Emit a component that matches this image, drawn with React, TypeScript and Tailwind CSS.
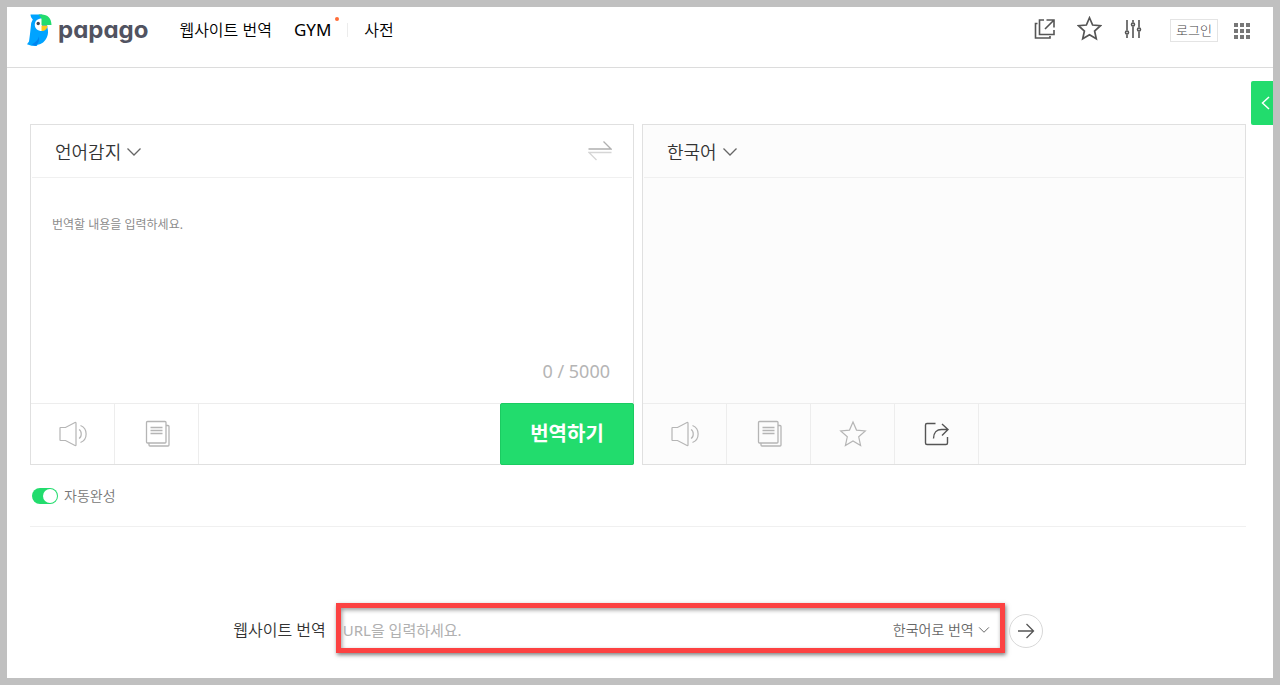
import { useState } from "react";

const MAX_LENGTH = 5000;

const SOURCE_LANGUAGES = ["언어감지", "한국어", "영어", "일본어"];
const TARGET_LANGUAGES = ["한국어", "영어", "일본어"];
const SITE_LANGUAGES = ["한국어로 번역", "영어로 번역", "일본어로 번역"];

const STAR_PATH =
  "M14 2l3.5 8.1 8.8.8-6.6 5.9 1.9 8.7L14 21l-7.6 4.5 1.9-8.7-6.6-5.9 8.8-.8z";

function PapagoBird() {
  return (
    <svg width="26" height="34" viewBox="0 0 26 34" aria-hidden="true">
      <path
        d="M3.500 1.500H15l4 5 1.500 8.500c.8 3 .8 6.200-.5 9-1.800 4.500-5.500 7.500-9.500 7.700-.3 1-.8 1.500-2 1.300l-4-.2-4.500-1.500L2 28.500 3 21l1.200-11 1.600-3.500C4.800 5.500 3.500 3.500 3.500 1.500z"
        fill="#00a3ff"
      />
      <path d="M12 23.500c-1.200 3.500-3.200 5.500-7.200 8l3.700 1.200c3-2 4.200-5.200 3.500-9.200z" fill="#0084f0" />
      <path d="M15 5.500c-4.500 0-7.200 2.500-7.200 6.200S10.400 18 15 18z" fill="#fff" />
      <circle cx="11.200" cy="10.500" r="1.700" fill="#444653" />
      <path d="M11.500 1.500h3c6.200 0 10 4 10 10.500h-10V5.500C13.500 4.200 12.500 2.500 11.500 1.500z" fill="#22dc6d" />
      <path d="M14.500 12.500h6c0 3.500-2.500 5.500-6 5.500z" fill="#ffc917" />
    </svg>
  );
}

function ChevronDown({ small = false }: { small?: boolean }) {
  return (
    <svg
      width={small ? 12 : 16}
      height={small ? 8 : 10}
      viewBox="0 0 16 10"
      fill="none"
      stroke="currentColor"
      strokeWidth="1.300"
      className="pointer-events-none text-[#666]"
      aria-hidden="true"
    >
      <path d="M1.500 1.500L8 8l6.500-6.500" />
    </svg>
  );
}

function SpeakerIcon() {
  return (
    <svg width="30" height="28" viewBox="0 0 30 28" fill="none" stroke="currentColor" strokeWidth="1.200" aria-hidden="true">
      <path d="M2.500 7.500h5L17 2.500q1-.3 1 .5v22q0 .8-1 .5l-9.500-5h-5q-.5 0-.5-.5V8q0-.5.500-.5z" />
      <path d="M21 9.500c3 1.500 3 7.500 0 9" />
      <path d="M22.500 5.500c7.500 3 7.500 14 0 17" />
    </svg>
  );
}

function CopyIcon() {
  return (
    <svg width="28" height="28" viewBox="0 0 28 28" fill="none" stroke="currentColor" strokeWidth="1.300" aria-hidden="true">
      <rect x="3.500" y="1.500" width="19.500" height="21.500" rx="1" />
      <path d="M23 5.500h2q1 0 1 1V25q0 1-1 1H7q-1 0-1-1v-2" />
      <path d="M7.500 7.500h12M7.500 10.500h12M7.500 13.500h12" />
    </svg>
  );
}

function StarIcon({ size, strokeWidth }: { size: number; strokeWidth: number }) {
  return (
    <svg width={size} height={size} viewBox="0 0 28 28" fill="none" stroke="currentColor" strokeWidth={strokeWidth} aria-hidden="true">
      <path d={STAR_PATH} />
    </svg>
  );
}

function ShareIcon() {
  return (
    <svg width="28" height="28" viewBox="0 0 28 28" fill="none" stroke="currentColor" strokeWidth="1.400" aria-hidden="true">
      <path d="M12.500 3.500H4q-1.500 0-1.500 1.500v18q0 1.500 1.500 1.500h19q1.500 0 1.500-1.500v-6" />
      <path d="M10.500 18.500c0-6 3.500-9 8-9h6M19 4l6 5.500-6 6" />
    </svg>
  );
}

function NewWindowIcon() {
  return (
    <svg width="22" height="22" viewBox="0 0 22 22" fill="none" stroke="currentColor" strokeWidth="1.600" aria-hidden="true">
      <path d="M10 2H5.500v14.500H20V12" />
      <path d="M3.500 5.500h-2V20H16v-2" />
      <path d="M12.500 2H20v7.500M20 2l-9 9" />
    </svg>
  );
}

function SettingsIcon() {
  return (
    <svg width="18" height="20" viewBox="0 0 18 20" fill="none" stroke="currentColor" strokeWidth="1.600" aria-hidden="true">
      <path d="M3 1v10.500M3 15.500V19M9 1v2.500M9 7.500V19M15 1v7.500M15 12.500V19" />
      <circle cx="3" cy="13.500" r="1.500" />
      <circle cx="9" cy="5.500" r="1.500" />
      <circle cx="15" cy="10.500" r="1.500" />
    </svg>
  );
}

function GridIcon() {
  return (
    <svg width="18" height="18" viewBox="0 0 18 18" fill="currentColor" aria-hidden="true">
      {[1, 7, 13].map((y) =>
        [1, 7, 13].map((x) => <rect key={`${x}-${y}`} x={x} y={y} width="4" height="4" />)
      )}
    </svg>
  );
}

type LanguageSelectProps = {
  label: string;
  options: string[];
};

function LanguageSelect({ label, options }: LanguageSelectProps) {
  return (
    <label className="flex items-center gap-[5px] pt-px text-[#333]">
      <select
        aria-label={label}
        className="field-sizing-content cursor-pointer appearance-none bg-transparent text-lg outline-none"
      >
        {options.map((option) => (
          <option key={option}>{option}</option>
        ))}
      </select>
      <ChevronDown />
    </label>
  );
}

type ToolButtonProps = {
  label: string;
  active?: boolean;
  children: React.ReactNode;
};

function ToolButton({ label, active = false, children }: ToolButtonProps) {
  return (
    <button
      type="button"
      aria-label={label}
      className={`flex w-[84px] items-center justify-center border-r border-[#ededed] ${
        active ? "text-[#555]" : "text-[#b5b5b5]"
      }`}
    >
      {children}
    </button>
  );
}

function Header() {
  return (
    <header className="flex h-[61px] items-start justify-between border-b border-[#dcdcdc] pr-[22px] pl-5">
      <div className="flex items-center pt-1.5">
        <a href="#" className="flex items-center gap-[5px]">
          <PapagoBird />
          <span className="font-['Inter',sans-serif] text-2xl leading-8 font-bold text-[#515361] [font-feature-settings:'cv11']">
            papago
          </span>
        </a>
        <nav className="ml-[31px] flex items-center text-base text-black">
          <a href="#">웹사이트 번역</a>
          <a href="#" className="relative ml-[22px] text-[17px] font-normal">
            GYM
            <span className="absolute top-0 -right-2 size-1 rounded-full bg-[#ff6c37]" />
          </a>
          <span className="mx-4 h-[14px] w-px bg-[#ececec]" />
          <a href="#">사전</a>
        </nav>
      </div>

      <div className="flex items-center pt-2 text-[#555]">
        <button type="button" aria-label="새 창">
          <NewWindowIcon />
        </button>
        <button type="button" aria-label="즐겨찾기" className="ml-[21px]">
          <StarIcon size={25} strokeWidth={1.9} />
        </button>
        <button type="button" aria-label="설정" className="ml-[22px]">
          <SettingsIcon />
        </button>
        <a
          href="#"
          className="mt-1 ml-7 flex h-[23px] w-12 items-center justify-center border border-[#e4e4e4] text-[13px] font-light text-[#444]"
        >
          로그인
        </a>
        <button type="button" aria-label="서비스 더보기" className="mt-1 ml-[15px] text-[#777]">
          <GridIcon />
        </button>
      </div>
    </header>
  );
}

function SourcePanel() {
  const [text, setText] = useState("");

  return (
    <section className="flex flex-1 flex-col border border-[#e0e0e0] bg-white">
      <div className="mx-px flex h-[53px] items-center justify-between border-b border-[#f0f0f0] pr-5 pl-[23px]">
        <LanguageSelect label="원본 언어" options={SOURCE_LANGUAGES} />
        <button type="button" aria-label="언어 바꾸기">
          <svg width="24" height="20" viewBox="0 0 24 20" fill="none" strokeWidth="1.300" aria-hidden="true">
            <path d="M.500 8h22.500L15.500.5" stroke="#b0b0b0" />
            <path d="M23.500 11.500H1l7.500 7.500" stroke="#d6d6d6" />
          </svg>
        </button>
      </div>
      <div className="flex h-[225px] flex-col">
        <textarea
          aria-label="번역할 내용"
          value={text}
          maxLength={MAX_LENGTH}
          onChange={(event) => setText(event.target.value)}
          placeholder="번역할 내용을 입력하세요."
          className="w-full flex-1 resize-none px-[21px] pt-[37px] text-xs leading-5 font-normal text-[#333] outline-none placeholder:text-[#8c8c8c]"
        />
        <p className="pr-[23px] pb-[18px] text-right text-lg font-normal text-[#b5b5b5]">
          {text.length} / {MAX_LENGTH}
        </p>
      </div>
      <div className="flex h-[61px] border-t border-[#ededed]">
        <ToolButton label="듣기">
          <SpeakerIcon />
        </ToolButton>
        <ToolButton label="복사">
          <CopyIcon />
        </ToolButton>
        <button
          type="button"
          className="-m-px ml-auto w-[134px] rounded-xs border border-[#1bcb61] bg-[#22dc6d] text-xl font-bold text-white"
        >
          번역하기
        </button>
      </div>
    </section>
  );
}

function TargetPanel() {
  return (
    <section className="flex flex-1 flex-col border border-[#e0e0e0] bg-[#fcfcfc]">
      <div className="mx-px flex h-[53px] items-center border-b border-[#f0f0f0] pl-[23px]">
        <LanguageSelect label="번역 언어" options={TARGET_LANGUAGES} />
      </div>
      <div className="h-[225px]" />
      <div className="flex h-[61px] border-t border-[#ededed]">
        <ToolButton label="듣기">
          <SpeakerIcon />
        </ToolButton>
        <ToolButton label="복사">
          <CopyIcon />
        </ToolButton>
        <ToolButton label="즐겨찾기">
          <StarIcon size={28} strokeWidth={1.2} />
        </ToolButton>
        <ToolButton label="공유" active>
          <ShareIcon />
        </ToolButton>
      </div>
    </section>
  );
}

function SiteTranslateForm() {
  return (
    <form
      onSubmit={(event) => event.preventDefault()}
      className="mt-[76px] flex items-center justify-center pb-6"
    >
      <label htmlFor="site-url" className="mr-2.5 shrink-0 pt-1 text-base text-[#333]">
        웹사이트 번역
      </label>
      <div className="flex h-[50px] w-full max-w-[669px] items-center border-[5px] border-[#fc4242] pt-1 pr-2.5 shadow-[1px_2px_4px_rgba(0,0,0,0.5),inset_1px_2px_4px_rgba(0,0,0,0.4)]">
        <input
          id="site-url"
          type="text"
          placeholder="URL을 입력하세요."
          className="min-w-0 flex-1 bg-transparent pl-0.5 text-[15px] font-normal text-[#333] outline-none placeholder:text-[#b0b0b0]"
        />
        <label className="flex items-center gap-1 text-[#666]">
          <select
            aria-label="사이트 번역 언어"
            className="field-sizing-content cursor-pointer appearance-none bg-transparent text-sm outline-none"
          >
            {SITE_LANGUAGES.map((language) => (
              <option key={language}>{language}</option>
            ))}
          </select>
          <ChevronDown small />
        </label>
      </div>
      <button
        type="submit"
        aria-label="번역"
        className="mt-[5px] ml-1 flex size-[34px] shrink-0 items-center justify-center rounded-full border border-[#d8d8d8] text-[#555]"
      >
        <svg width="18" height="16" viewBox="0 0 18 16" fill="none" stroke="currentColor" strokeWidth="1.300" aria-hidden="true">
          <path d="M1 8h15.500M9.500 1l7 7-7 7" />
        </svg>
      </button>
    </form>
  );
}

export default function App() {
  const [autoComplete, setAutoComplete] = useState(true);

  return (
    <div className="flex min-h-screen bg-[#c0c0c0] p-[7px] font-['Noto_Sans','Noto_Sans_CJK_KR',sans-serif] font-[350]">
      <div className="relative flex-1 bg-white">
        <Header />

        <button
          type="button"
          aria-label="기록 열기"
          className="absolute top-[74px] right-0 flex h-11 w-[22px] items-center justify-end rounded-l-xs bg-[#22dc6d] pr-[3px] text-white"
        >
          <svg width="9" height="14" viewBox="0 0 9 14" fill="none" stroke="currentColor" strokeWidth="1.500" aria-hidden="true">
            <path d="M8 1L1.500 7 8 13" />
          </svg>
        </button>

        <main className="pt-14 pr-[27px] pl-[23px]">
          <div className="flex gap-2">
            <SourcePanel />
            <TargetPanel />
          </div>

          <div className="flex h-[62px] items-center border-b border-[#f0f0f0]">
            <label className="flex cursor-pointer items-center gap-1.5 pl-0.5 text-sm text-[#777]">
              <input
                type="checkbox"
                checked={autoComplete}
                onChange={(event) => setAutoComplete(event.target.checked)}
                className="h-4 w-[26px] cursor-pointer appearance-none rounded-full bg-[#ccc] p-px before:block before:size-[14px] before:rounded-full before:bg-white checked:bg-[#22dc6d] checked:before:ml-auto"
              />
              자동완성
            </label>
          </div>

          <SiteTranslateForm />
        </main>
      </div>
    </div>
  );
}
